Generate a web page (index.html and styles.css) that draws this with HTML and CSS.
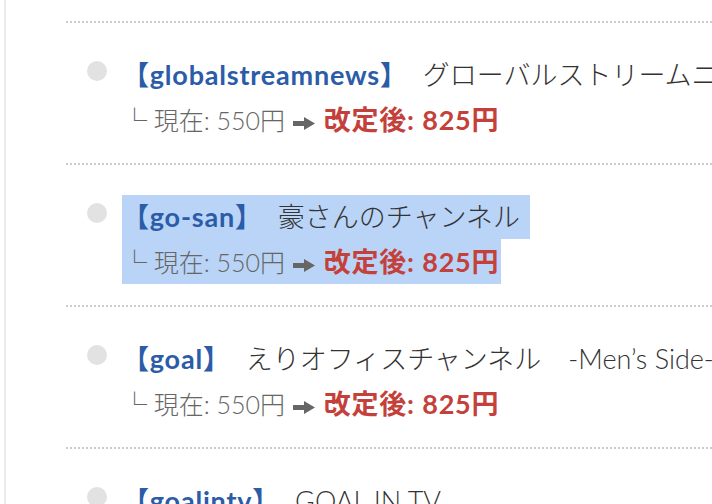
FILE: index.html
```html
<!DOCTYPE html>
<html lang="ja">
<head>
<meta charset="utf-8">
<title>料金改定一覧</title>
<link rel="stylesheet" href="styles.css">
</head>
<body>
<div class="page">
  <ul class="list">
    <li class="item">
      <span class="dot"></span>
      <div class="body">
        <div class="title"><span class="key">【globalstreamnews】</span> <span class="name">グローバルストリームニュース</span></div>
        <div class="price"><span class="corner">└</span> 現在: 550円 <svg class="arrow" viewBox="0 0 22 13" width="22" height="13"><path d="M0 4H11V0L22 6.5L11 13V9H0Z"/></svg> <strong class="new">改定後: 825円</strong></div>
      </div>
    </li>
    <li class="item">
      <span class="dot"></span>
      <div class="body selected">
        <div class="title"><span class="key">【go-san】</span> <span class="name">豪さんのチャンネル</span></div>
        <div class="price"><span class="corner">└</span> 現在: 550円 <svg class="arrow" viewBox="0 0 22 13" width="22" height="13"><path d="M0 4H11V0L22 6.5L11 13V9H0Z"/></svg> <strong class="new">改定後: 825円</strong></div>
      </div>
    </li>
    <li class="item">
      <span class="dot"></span>
      <div class="body">
        <div class="title"><span class="key">【goal】</span> <span class="name">えりオフィスチャンネル　-Men’s Side-</span></div>
        <div class="price"><span class="corner">└</span> 現在: 550円 <svg class="arrow" viewBox="0 0 22 13" width="22" height="13"><path d="M0 4H11V0L22 6.5L11 13V9H0Z"/></svg> <strong class="new">改定後: 825円</strong></div>
      </div>
    </li>
    <li class="item">
      <span class="dot"></span>
      <div class="body">
        <div class="title"><span class="key">【goalintv】</span> <span class="name">GOAL IN TV</span></div>
        <div class="price"><span class="corner">└</span> 現在: 550円 <svg class="arrow" viewBox="0 0 22 13" width="22" height="13"><path d="M0 4H11V0L22 6.5L11 13V9H0Z"/></svg> <strong class="new">改定後: 825円</strong></div>
      </div>
    </li>
  </ul>
</div>
</body>
</html>
```
FILE: styles.css
```css
html, body {
  margin: 0;
  padding: 0;
  background: #ffffff;
  overflow: hidden;
}

body {
  font-family: "Lato", "Noto Sans CJK JP", sans-serif;
  white-space: nowrap;
}

.page {
  margin-left: 4px;
  border-left: 2px solid #ececec;
  padding-top: 21px;
  min-height: 600px;
}

.list {
  list-style: none;
  margin: 0;
  padding: 0 0 0 60px;
}

.item {
  display: flex;
  align-items: flex-start;
  gap: 15px;
  padding: 32px 0 21px 21px;
  background-image: linear-gradient(to right, #cccccc 50%, transparent 50%);
  background-size: 4px 2px;
  background-repeat: repeat-x;
  background-position: 0 0;
}

.dot {
  flex: none;
  width: 20px;
  height: 20px;
  border-radius: 50%;
  background: #e2e2e2;
  margin-top: 8px;
}

.body {
  display: flex;
  flex-direction: column;
  align-items: flex-start;
}

.title {
  font-size: 27px;
  line-height: 44px;
  color: #333333;
}

.key {
  font-weight: 700;
  color: #2b5ca8;
  letter-spacing: 0.8px;
}

.name {
  font-weight: 300;
  color: #333333;
  margin-left: 8px;
}

.price {
  font-size: 25px;
  line-height: 44px;
  color: #666666;
  font-weight: 300;
}

.corner {
  font-family: "Noto Sans CJK JP", sans-serif;
  color: #666666;
}

.arrow {
  fill: #666666;
  vertical-align: 0;
  margin: 0 2px 0 1px;
}

.new {
  font-size: 27px;
  font-weight: 700;
  color: #c4403a;
  letter-spacing: 0.8px;
}

.selected .title,
.selected .price {
  background: #b9d4f6;
}

.selected .title {
  padding-right: 10px;
}

.selected .price {
  padding-right: 2px;
}
```
